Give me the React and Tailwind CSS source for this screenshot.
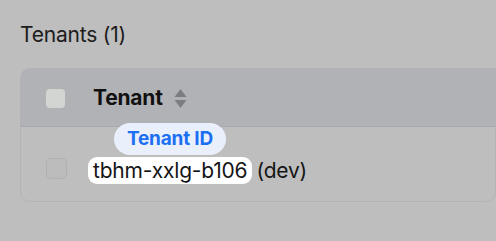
import React from 'react';

function SortIcon() {
  return (
    <svg width="13" height="21" viewBox="0 0 13 21" className="ml-[11px]">
      <path d="M6.5 1 L12.5 9 H0.5 Z" fill="#7c7d80" />
      <path d="M6.5 20 L12.5 12 H0.5 Z" fill="#7c7d80" />
    </svg>
  );
}

export default function App() {
  return (
    <div className="w-[496px] h-[241px] bg-[#bebebe] overflow-hidden pl-5 pt-[22px] font-['Inter',sans-serif]">
      <h2 className="text-[21px] leading-[26px] text-[#1c1c1c] tracking-[-0.2px]">Tenants (1)</h2>

      <div className="mt-[20px]">
        {/* header */}
        <div className="h-[59px] bg-[#b1b2b5] rounded-tl-[10px] flex items-center pl-[26px] pt-[2px] border-b border-[#a9aaad]">
          <div className="w-[19px] h-[19px] rounded-[4px] bg-[#d3d5d3]" />
          <span className="ml-[28px] text-[21px] font-bold text-[#111] tracking-[-0.2px]">Tenant</span>
          <SortIcon />
        </div>

        {/* row */}
        <div className="h-[75px] border border-[#b4b4b4] border-t-0 rounded-b-[10px] flex items-start pt-[28px] pl-[25px]">
          <div className="h-[27px] flex items-center">
            <div className="w-[21px] h-[21px] rounded-[5px] border border-[#b0b0b0] bg-[#bcbcbc]" />
          </div>
          <div className="relative ml-[21px] flex items-center">
            <span className="absolute left-[26px] -top-[32px] h-[32px] px-[13px] rounded-full bg-[#e9f0fc] text-[#1b6ff2] text-[19px] font-bold flex items-center tracking-[-0.2px]">
              Tenant ID
            </span>
            <span className="bg-white rounded-[9px] px-[5px] h-[27px] flex items-center text-[21px] text-[#151515] tracking-[-0.2px]">
              tbhm-xxlg-b106
            </span>
            <span className="ml-[4px] text-[21px] text-[#151515] tracking-[-0.2px]">(dev)</span>
          </div>
        </div>
      </div>
    </div>
  );
}
